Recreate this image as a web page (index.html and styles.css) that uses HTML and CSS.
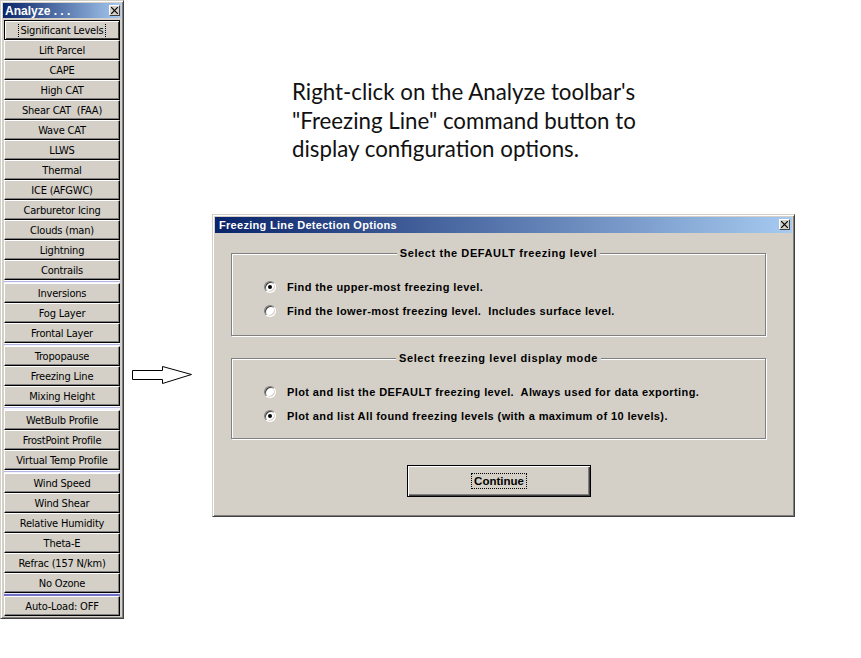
FILE: index.html
```html
<!DOCTYPE html>
<html lang="en">

<head>
    <meta charset="utf-8">
    <title>Freezing Line Detection Options</title>
    <link rel="stylesheet" href="styles.css">
</head>

<body>
    <div class="page">
        <!--Analyze toolbar-->
        <aside class="toolbar">
            <div class="tb-title">
                <span>Analyze . . .</span>
                <span class="close">
                    <svg width="7" height="7" viewBox="0 0 7 7"><path d="M0 0L7 7M7 0L0 7" stroke="#000" stroke-width="1.2"/></svg>
                </span>
            </div>
            <div class="tb-group">
                <button class="tb-btn default"><span>Significant Levels</span></button>
                <button class="tb-btn">Lift Parcel</button>
                <button class="tb-btn">CAPE</button>
                <button class="tb-btn">High CAT</button>
                <button class="tb-btn">Shear CAT&nbsp; (FAA)</button>
                <button class="tb-btn">Wave CAT</button>
                <button class="tb-btn">LLWS</button>
                <button class="tb-btn">Thermal</button>
                <button class="tb-btn">ICE (AFGWC)</button>
                <button class="tb-btn">Carburetor Icing</button>
                <button class="tb-btn">Clouds (man)</button>
                <button class="tb-btn">Lightning</button>
                <button class="tb-btn">Contrails</button>
            </div>
            <div class="tb-sep"></div>
            <div class="tb-group">
                <button class="tb-btn">Inversions</button>
                <button class="tb-btn">Fog Layer</button>
                <button class="tb-btn">Frontal Layer</button>
            </div>
            <div class="tb-sep"></div>
            <div class="tb-group">
                <button class="tb-btn">Tropopause</button>
                <button class="tb-btn">Freezing Line</button>
                <button class="tb-btn">Mixing Height</button>
            </div>
            <div class="tb-sep wide"></div>
            <div class="tb-group">
                <button class="tb-btn">WetBulb Profile</button>
                <button class="tb-btn">FrostPoint Profile</button>
                <button class="tb-btn">Virtual Temp Profile</button>
            </div>
            <div class="tb-sep"></div>
            <div class="tb-group">
                <button class="tb-btn">Wind Speed</button>
                <button class="tb-btn">Wind Shear</button>
                <button class="tb-btn">Relative Humidity</button>
                <button class="tb-btn">Theta-E</button>
                <button class="tb-btn">Refrac (157 N/km)</button>
                <button class="tb-btn">No Ozone</button>
            </div>
            <div class="tb-sep strong"></div>
            <div class="tb-group">
                <button class="tb-btn">Auto-Load: OFF</button>
            </div>
        </aside>

        <main class="content">
            <p class="note">Right-click on the Analyze toolbar's<br>"Freezing Line" command button to<br>display configuration options.</p>

            <div class="row">
                <!--pil mod dialogen-->
                <svg class="arrow" width="62" height="20" viewBox="0 0 62 20">
                    <polygon points="1.5,5.5 31.5,5.5 31.5,1.5 60.5,9.5 31.5,18.5 31.5,14.5 1.5,14.5" fill="#fff" stroke="#000" stroke-width="1"/>
                </svg>

                <section class="dialog">
                    <div class="dlg-title">
                        <span>Freezing Line Detection Options</span>
                        <span class="close">
                            <svg width="7" height="7" viewBox="0 0 7 7"><path d="M0 0L7 7M7 0L0 7" stroke="#000" stroke-width="1.2"/></svg>
                        </span>
                    </div>
                    <div class="dlg-body">
                        <fieldset class="group first">
                            <legend>Select the DEFAULT freezing level</legend>
                            <label class="opt"><span class="radio on"></span>Find the upper-most freezing level.</label>
                            <label class="opt"><span class="radio"></span>Find the lower-most freezing level.&nbsp; Includes surface level.</label>
                        </fieldset>
                        <fieldset class="group second">
                            <legend>Select freezing level display mode</legend>
                            <label class="opt"><span class="radio"></span>Plot and list the DEFAULT freezing level.&nbsp; Always used for data exporting.</label>
                            <label class="opt"><span class="radio on"></span>Plot and list All found freezing levels (with a maximum of 10 levels).</label>
                        </fieldset>
                        <button class="continue"><span>Continue</span></button>
                    </div>
                </section>
            </div>
        </main>
    </div>
</body>

</html>
```

FILE: styles.css
```css
body {
    margin: 0;
    background: #fff;
    font-family: "Liberation Sans", Arial, sans-serif;
}

.page {
    display: flex;
    align-items: flex-start;
}

/* toolbar til venstre */

.toolbar {
    width: 124px;
    box-sizing: border-box;
    background: #d4d0c8;
    border: 1px solid;
    border-color: #d4d0c8 #404040 #404040 #d4d0c8;
    box-shadow: inset 1px 1px 0 #fff, inset -1px -1px 0 #808080;
    padding: 2px;
}

.tb-title {
    height: 15px;
    display: flex;
    align-items: center;
    justify-content: space-between;
    padding: 0 1px 0 2px;
    margin-bottom: 2px;
    background: linear-gradient(to right, #0a246a, #a6caf0);
    color: #fff;
    font-weight: bold;
    font-size: 12px;
}

.close {
    width: 11px;
    height: 11px;
    box-sizing: border-box;
    display: flex;
    align-items: center;
    justify-content: center;
    background: #d4d0c8;
    border: 1px solid;
    border-color: #fff #404040 #404040 #fff;
}

.tb-btn {
    display: block;
    width: 116px;
    height: 20px;
    margin: 0 1px;
    padding: 0;
    box-sizing: border-box;
    background: #d4d0c8;
    border: 1px solid;
    border-color: #fff #000 #000 #fff;
    box-shadow: inset -1px -1px 0 #808080;
    color: #000;
    font-family: "Liberation Sans Narrow", "DejaVu Sans Condensed", "Liberation Sans", sans-serif;
    font-size: 11px;
    letter-spacing: -.2px;
    line-height: 17px;
    text-align: center;
    white-space: nowrap;
}

.tb-btn.default {
    border-color: #000;
    box-shadow: inset 1px 1px 0 #fff, inset -1px -1px 0 #404040;
}

.tb-btn.default span {
    border-left: 1px dotted #000;
    border-right: 1px dotted #000;
    padding: 0 1px;
}

.tb-sep {
    height: 3px;
    margin: 0 1px;
    background: linear-gradient(#fff 0 1px, #b4b4e4 1px 2px, #f4f4ff 2px);
}

.tb-sep.wide {
    height: 4px;
}

.tb-sep.strong {
    background: linear-gradient(#e8e8f8 0 1px, #7070c8 1px);
}

/* højre side */

.content {
    display: flex;
    flex-direction: column;
}

.note {
    margin: 78px 0 0 168px;
    font-family: Lato, "Open Sans", sans-serif;
    font-size: 22.3px;
    line-height: 28.5px;
    color: #111;
}

.row {
    display: flex;
    align-items: flex-start;
    margin-top: 50px;
}

.arrow {
    margin: 151px 0 0 7px;
}

/* dialog vinduet */

.dialog {
    margin-left: 19px;
    width: 583px;
    height: 303px;
    box-sizing: border-box;
    background: #d4d0c8;
    border: 1px solid;
    border-color: #d4d0c8 #404040 #404040 #d4d0c8;
    box-shadow: inset 1px 1px 0 #fff, inset -1px -1px 0 #808080;
    padding: 2px;
}

.dlg-title {
    height: 16px;
    display: flex;
    align-items: center;
    justify-content: space-between;
    padding: 0 2px 0 4px;
    background: linear-gradient(to right, #0a246a, #a6caf0);
    color: #fff;
    font-weight: bold;
    font-size: 11px;
    letter-spacing: .3px;
}

.dlg-body {
    padding-left: 16px;
    font-size: 11px;
    font-weight: bold;
    letter-spacing: .4px;
    color: #000;
}

.group {
    width: 535px;
    min-width: 0;
    box-sizing: border-box;
    margin: 14px 0 0;
    padding: 15px 0 12px;
    border: 1px solid #808080;
    box-shadow: 1px 1px 0 #fff, inset 1px 1px 0 #fff;
}

.group.second {
    margin-top: 16px;
    padding-bottom: 10px;
}

.group legend {
    margin: 0 auto;
    padding: 0 3px;
    line-height: 13px;
    letter-spacing: .6px;
    background: #d4d0c8;
}

.opt {
    display: flex;
    align-items: center;
    height: 24px;
    padding-left: 32px;
    white-space: nowrap;
}

.radio {
    width: 12px;
    height: 12px;
    box-sizing: border-box;
    margin-right: 11px;
    display: flex;
    align-items: center;
    justify-content: center;
    border-radius: 50%;
    border: 1px solid;
    border-color: #808080 #fff #fff #808080;
    background: #fff;
    box-shadow: inset 1px 1px 0 #404040, inset -1px -1px 0 #d4d0c8;
}

.radio.on::after {
    content: "";
    width: 4px;
    height: 4px;
    border-radius: 50%;
    background: #000;
}

.continue {
    display: block;
    width: 184px;
    height: 32px;
    margin: 26px 0 0 176px;
    padding: 0;
    box-sizing: border-box;
    background: #d4d0c8;
    border: 1px solid #000;
    box-shadow: inset 1px 1px 0 #fff, inset -1px -1px 0 #404040, inset -2px -2px 0 #808080;
    color: #000;
    font-family: "Liberation Sans", Arial, sans-serif;
    font-size: 11.5px;
    font-weight: bold;
}

.continue span {
    border: 1px dotted #000;
    padding: 1px 2px;
}
```
